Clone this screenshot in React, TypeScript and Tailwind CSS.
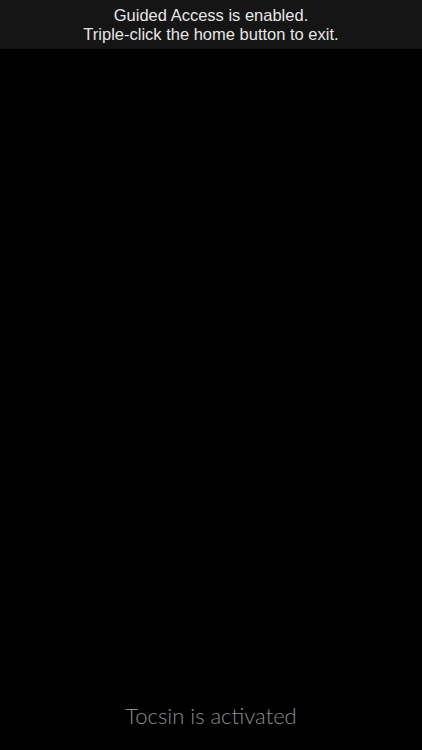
export default function App() {
  return (
    <div className="flex h-[750px] w-full flex-col bg-black">
      <div className="flex h-[49px] flex-col items-center justify-center bg-[#151515] text-[16.5px] leading-[19px] text-[#e6e6e6] [font-family:'Liberation_Sans',Arial,sans-serif]">
        <p>Guided Access is enabled.</p>
        <p>Triple-click the home button to exit.</p>
      </div>
      <div className="flex-1" />
      <div className="pb-[21px] text-center text-[22px] font-light leading-[26px] text-[#8c8c8c] [font-family:Lato,sans-serif]">
        Tocsin is activated
      </div>
    </div>
  );
}
